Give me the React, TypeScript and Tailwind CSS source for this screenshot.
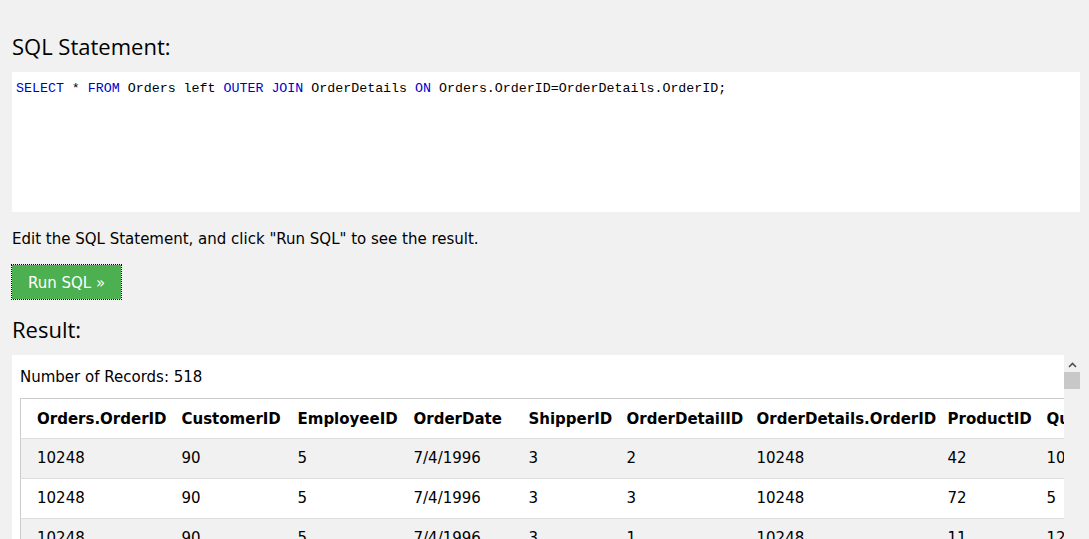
const headerCols = [
  { name: 'Orders.OrderID', w: 'w-[153px]' },
  { name: 'CustomerID', w: 'w-[116px]' },
  { name: 'EmployeeID', w: 'w-[116px]' },
  { name: 'OrderDate', w: 'w-[115px]' },
  { name: 'ShipperID', w: 'w-[98px]' },
  { name: 'OrderDetailID', w: 'w-[130px]' },
  { name: 'OrderDetails.OrderID', w: 'w-[191px]' },
  { name: 'ProductID', w: 'w-[99px]' },
  { name: 'Quantity', w: 'w-[110px]' },
];

const rows = [
  ['10248', '90', '5', '7/4/1996', '3', '2', '10248', '42', '10'],
  ['10248', '90', '5', '7/4/1996', '3', '3', '10248', '72', '5'],
  ['10248', '90', '5', '7/4/1996', '3', '1', '10248', '11', '12'],
];

const kw = 'text-[#0000cd]';

export default function App() {
  return (
    <div className="h-[539px] overflow-hidden bg-[#f1f1f1] pl-3 pr-[9px] text-black" style={{ fontFamily: '"DejaVu Sans", Verdana, sans-serif' }}>
      <h2 className="pt-[31px] text-[22px] leading-[30px]" style={{ fontFamily: '"Open Sans", "Noto Sans", sans-serif' }}>SQL Statement:</h2>

      <div className="mt-[11px] h-[140px] bg-white pl-1 pt-[8px] text-[13.3px] leading-[17px]" style={{ fontFamily: '"Liberation Mono", monospace' }}>
        <span className={kw}>SELECT</span> * <span className={kw}>FROM</span> Orders left <span className={kw}>OUTER</span> <span className={kw}>JOIN</span> OrderDetails <span className={kw}>ON</span> Orders.OrderID=OrderDetails.OrderID;
      </div>

      <p className="mt-[18px] text-[15px] leading-[18px]">Edit the SQL Statement, and click "Run SQL" to see the result.</p>

      <button className="mt-[17px] h-[34px] bg-[#4caf50] px-4 pt-[2px] text-[15px] text-white outline-1 outline-dotted outline-black">
        Run SQL »
      </button>

      <h2 className="mt-[15px] text-[22px] leading-[30px]" style={{ fontFamily: '"Open Sans", "Noto Sans", sans-serif' }}>Result:</h2>

      <div className="mt-[11px] flex h-[200px]">
        <div className="min-w-0 flex-1 overflow-hidden bg-white px-2">
          <div className="pt-[13px] text-[15px] leading-[18px]">Number of Records: 518</div>
          <table className="mt-[12px] w-[1128px] table-fixed border-collapse border border-[#ccc] text-[15px]">
            <thead>
              <tr className="h-10 border-b border-[#ddd]">
                {headerCols.map((c, i) => (
                  <th key={c.name} className={`${c.w} ${i === 0 ? 'pl-4' : 'pl-2'} pr-2 pt-[2px] text-left font-bold whitespace-nowrap`}>
                    {c.name}
                  </th>
                ))}
              </tr>
            </thead>
            <tbody>
              {rows.map((r, ri) => (
                <tr key={ri} className={`h-10 border-b border-[#ddd] ${ri % 2 === 0 ? 'bg-[#f1f1f1]' : 'bg-white'}`}>
                  {r.map((v, i) => (
                    <td key={i} className={`${i === 0 ? 'pl-4' : 'pl-2'} pr-2 whitespace-nowrap`}>{v}</td>
                  ))}
                </tr>
              ))}
            </tbody>
          </table>
        </div>
        <div className="flex w-4 flex-col items-center bg-[#f1f1f1]">
          <svg width="9" height="6" viewBox="0 0 9 6" className="mt-[7px]">
            <path d="M1 5 L4.5 1.5 L8 5" fill="none" stroke="#505050" strokeWidth="1.6" />
          </svg>
          <div className="mt-[4px] h-[17px] w-4 bg-[#c8c8c8]" />
        </div>
      </div>
    </div>
  );
}
